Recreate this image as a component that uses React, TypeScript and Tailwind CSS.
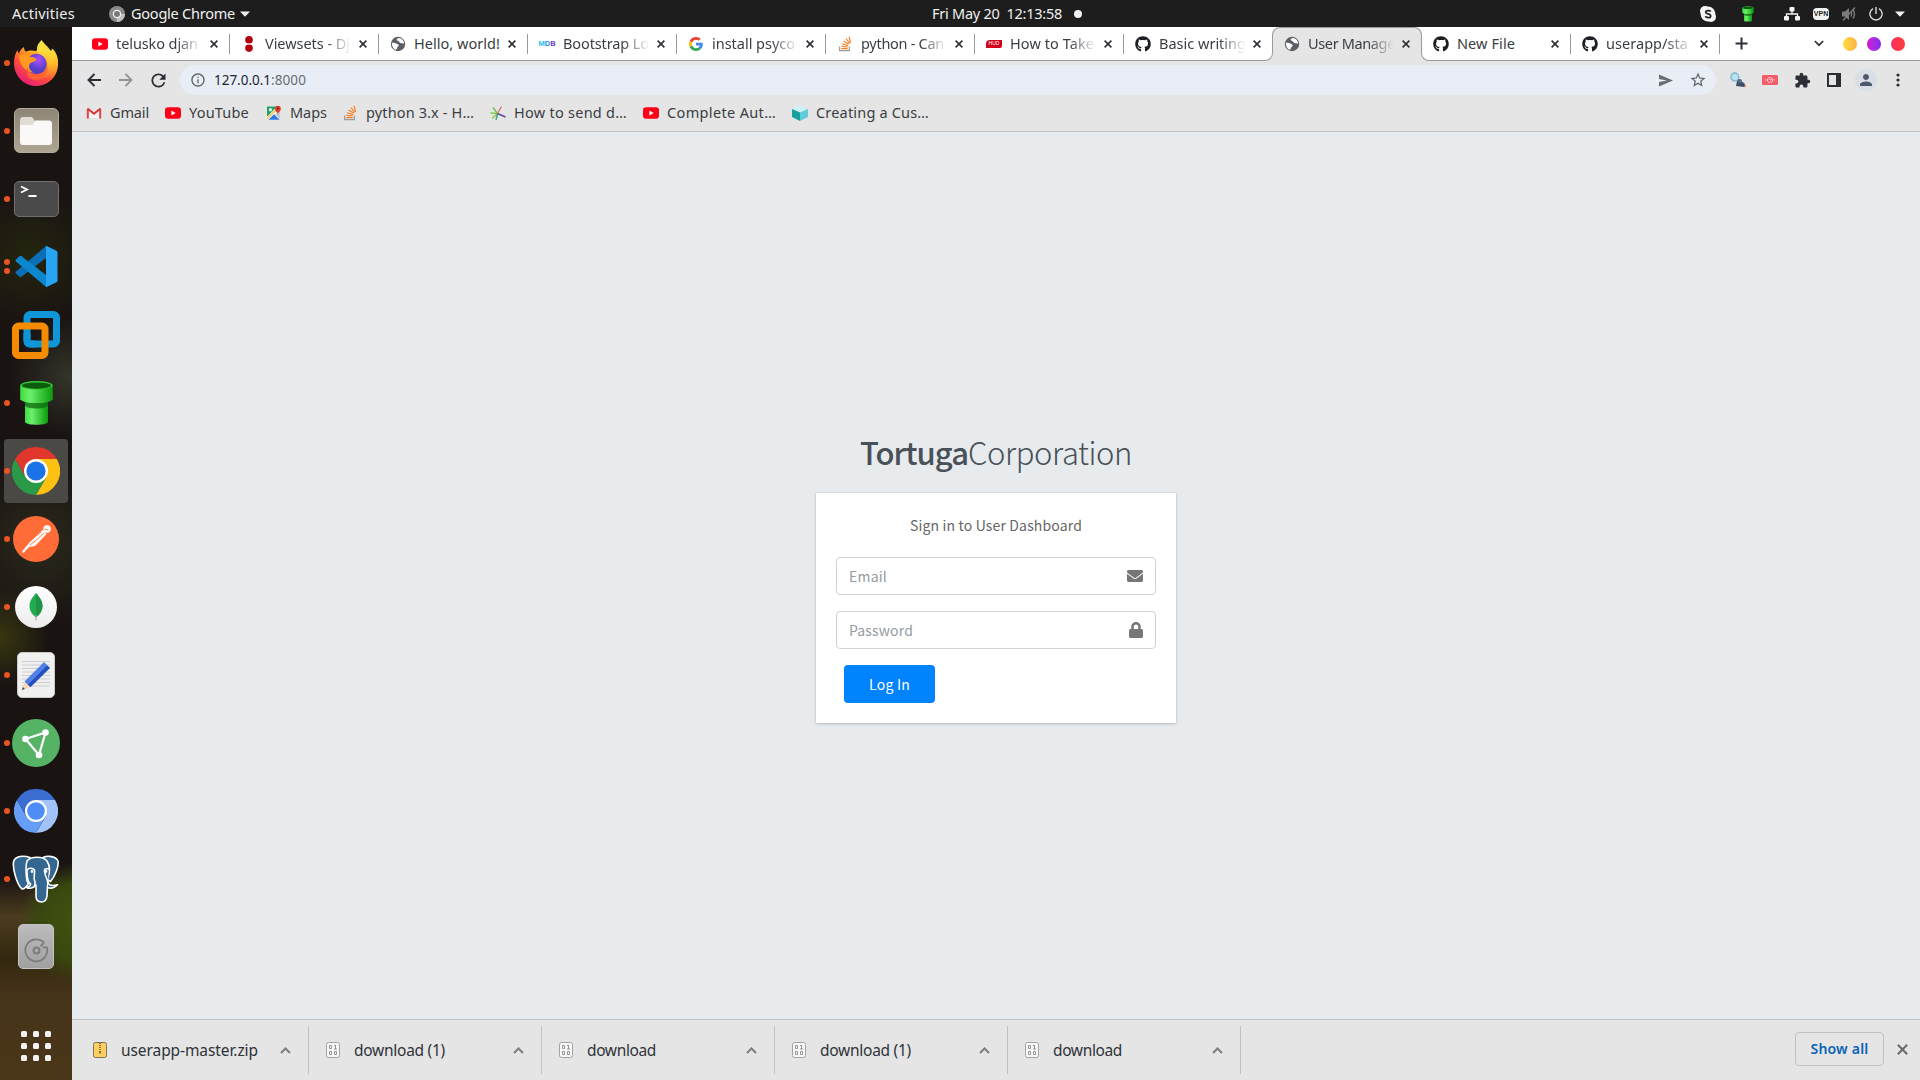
import React, { useLayoutEffect, useRef, useState } from "react";
import { FaGithub, FaEnvelope, FaLock } from "react-icons/fa";
import { MdExtension, MdPerson, MdStarBorder, MdRefresh, MdInfoOutline } from "react-icons/md";

/* Text run whose tracking is adjusted so that it fills the given width. */
function Label({ w, className = "", children }: { w?: number; className?: string; children: string }) {
  const ref = useRef<HTMLSpanElement>(null);
  const [sp, setSp] = useState(0);
  useLayoutEffect(() => {
    if (!w || !ref.current) return;
    setSp((w - ref.current.getBoundingClientRect().width) / children.length);
  }, []);
  return (
    <span ref={ref} className={`inline-block shrink-0 whitespace-pre ${className}`} style={{ letterSpacing: `${sp}px` }}>
      {children}
    </span>
  );
}

const YouTube = () => (
  <svg width="16" height="16" viewBox="0 0 16 16">
    <rect y="2.2" width="16" height="11.6" rx="3" fill="#ff0018" />
    <path d="M6.4 5.6v4.8L10.6 8z" fill="#fff" />
  </svg>
);
const GlobeIcon = () => (
  <svg width="16" height="16" viewBox="0 0 16 16">
    <circle cx="8" cy="8" r="7.2" fill="#5b6066" />
    <path d="M1.900 6.800c1.800 0 3.400-.2 4.300.8.900 1 2.600.3 2.500 1.800-.1 1-1.300 1-1.500 2.200-.2 1-.6 2-1.700 2.200C3.200 12.700 1.600 10 1.900 6.800zM9 1.900c-1.300.5-2.700.8-2.300 2 .4 1.100 1.900.6 2.400 1.700.5 1.200 1.500 1.800 2.800 1.600 1-.2 1.500.5 2.200.3C14 4.700 11.800 2.200 9 1.900z" fill="#fff" />
  </svg>
);
const GitHub = () => <FaGithub className="size-4 text-[#1b1f23]" />;
const StackOverflow = () => (
  <svg width="16" height="16" viewBox="0 0 16 16" fill="none">
    <path d="M2.600 10.500v4.200h9.800v-4.200" stroke="#9c9ea1" strokeWidth="1.300" />
    <path d="M4.300 12.600h6.400M4.400 10.300l6.300.7M5 7.700l6 1.900M6.600 4.900l5.200 3.400M9.100 2.500l3.600 5M12.200.8l1.300 6" stroke="#f47f24" strokeWidth="1.200" />
  </svg>
);
const DjangoRest = () => (
  <svg width="16" height="16" viewBox="0 0 16 16">
    <circle cx="8" cy="3.900" r="3.800" fill="#b3000f" />
    <circle cx="8" cy="12.100" r="3.800" fill="#b3000f" />
    <path d="M4 8h8" stroke="#fff" strokeWidth="1" />
  </svg>
);
const Mdb = () => (
  <span className="flex w-4 justify-center font-['Liberation_Sans'] text-[7.500px] font-bold leading-none">
    <span className="text-[#21bfe6]">M</span><span className="text-[#2b8fe0]">D</span><span className="text-[#6a3fc0]">B</span>
  </span>
);
const GoogleG = () => (
  <svg width="14" height="14" viewBox="0 0 48 48">
    <path fill="#EA4335" d="M24 9.500c3.500 0 6.700 1.200 9.200 3.600l6.900-6.900C35.900 2.400 30.500 0 24 0 14.600 0 6.500 5.400 2.600 13.200l8 6.200C12.400 13.700 17.700 9.500 24 9.500z" />
    <path fill="#4285F4" d="M47 24.600c0-1.600-.2-3.100-.4-4.600H24v9h12.900c-.6 3-2.200 5.500-4.700 7.200l7.700 6C44.400 38 47 31.900 47 24.600z" />
    <path fill="#FBBC05" d="M10.500 28.600c-.5-1.500-.8-3-.8-4.600s.3-3.100.8-4.600l-8-6.200C1 16.500 0 20.100 0 24s.9 7.500 2.600 10.800z" />
    <path fill="#34A853" d="M24 48c6.500 0 11.900-2.100 15.900-5.800l-7.700-6c-2.200 1.500-4.900 2.300-8.200 2.300-6.300 0-11.600-4.200-13.500-9.900l-8 6.200C6.500 42.600 14.600 48 24 48z" />
  </svg>
);
const Huo = () => (
  <span className="flex h-2 w-4 items-center justify-center rounded-tl-[4px] rounded-br-[2px] bg-[#d3001b] font-['Liberation_Sans'] text-[5px] leading-none text-white">HUD</span>
);

const tabs = [
  { icon: <YouTube />, title: "telusko djan", w: 82 },
  { icon: <DjangoRest />, title: "Viewsets - Dj", w: 85 },
  { icon: <GlobeIcon />, title: "Hello, world!", w: 86 },
  { icon: <Mdb />, title: "Bootstrap Lo", w: 86 },
  { icon: <GoogleG />, title: "install psyco", w: 83 },
  { icon: <StackOverflow />, title: "python - Can", w: 83 },
  { icon: <Huo />, title: "How to Take", w: 84 },
  { icon: <GitHub />, title: "Basic writing", w: 87 },
  { icon: <GlobeIcon />, title: "User Manage", w: 87, active: true },
  { icon: <GitHub />, title: "New File", w: 58 },
  { icon: <GitHub />, title: "userapp/sta", w: 82 },
];

const Cross = ({ s = 8, c = "#2d3136", sw = 1.6 }: { s?: number; c?: string; sw?: number }) => (
  <svg width={s} height={s} viewBox="0 0 8 8"><path d="M.6.6l6.800 6.800M7.400.6L.6 7.400" stroke={c} strokeWidth={sw} /></svg>
);

function Tab({ icon, title, w, active }: { icon: React.ReactNode; title: string; w: number; active?: boolean }) {
  const fits = title === "Hello, world!" || title === "New File";
  return (
    <div
      className={
        active
          ? "relative z-10 -ml-px flex h-[34px] w-[150px] shrink-0 items-center rounded-t-lg border border-b-0 border-[#9b9b9b] bg-[#e5e5e5] pb-px pl-[11px]"
          : "relative flex h-[34px] w-[149px] shrink-0 items-center border-b border-[#9b9b9b] pl-[11px]"
      }
    >
      {active && (
        <>
          <div className="absolute -left-2 bottom-0 size-2 bg-[#e5e5e5]"><div className="size-2 rounded-br-lg border-b border-r border-[#9b9b9b] bg-white" /></div>
          <div className="absolute -right-2 bottom-0 size-2 bg-[#e5e5e5]"><div className="size-2 rounded-bl-lg border-b border-l border-[#9b9b9b] bg-white" /></div>
        </>
      )}
      <span className="flex w-4 shrink-0 justify-center">{icon}</span>
      <span className={`mb-[2px] ml-2 w-[88px] shrink-0 text-[14.500px] leading-5 text-[#3a3e43] ${fits ? "" : "[mask-image:linear-gradient(to_right,#000_68%,transparent_98%)]"}`}>
        <Label w={w}>{title}</Label>
      </span>
      <span className="ml-[6px]"><Cross /></span>
      {!active && title !== "Basic writing" && <span className="absolute right-0 top-[7px] h-5 w-px bg-[#999]" />}
    </div>
  );
}

const Gmail = () => (
  <svg width="16" height="16" viewBox="0 0 16 16" fill="none">
    <path d="M3 5.500V13h10V5.500L8 9.500z" fill="#f4f4f4" />
    <path d="M1.800 13.500V4M14.200 13.500V4" stroke="#e04545" strokeWidth="2" />
    <path d="M1.400 3.400L8 8.800l6.600-5.400" stroke="#d93535" strokeWidth="2" />
  </svg>
);
const Maps = () => (
  <svg width="16" height="16" viewBox="0 0 16 16">
    <rect x="1" y="1.500" width="13" height="13" rx="1" fill="#fff" />
    <path d="M1 1.500h10L2 11H1z" fill="#1fa463" />
    <path d="M1 12l11-10.500 1.500 1.500L2 14.500H1z" fill="#f2d37a" />
    <path d="M2.500 14.800L8 9.200l5.700 5.600z" fill="#2a79e8" />
    <path d="M14 6v8L9 9.500z" fill="#c5c9cc" />
    <circle cx="4.500" cy="4.800" r="1.700" fill="#d8f1e4" />
    <path d="M11.800 9.500C11.600 7 9 6.500 9 3.700a2.900 2.900 0 015.800 0c0 2.800-2.800 3.300-3 5.800z" fill="#e33b2f" />
    <circle cx="11.900" cy="3.600" r="1" fill="#7d120b" />
  </svg>
);
const Star6 = () => (
  <svg width="16" height="16" viewBox="0 0 16 16" fill="none" strokeWidth="1.400">
    <path d="M7.500 8.500L3 2.500" stroke="#6ebf4a" /><path d="M7.500 8.500L.5 8" stroke="#7ad04a" /><path d="M7.500 8.500l-5.500 5" stroke="#8cc63f" />
    <path d="M7.500 8.500L6 15" stroke="#3aa08a" /><path d="M7.500 8.500L15.500 12" stroke="#5d4a9c" /><path d="M7.500 8.500l4-7" stroke="#e2766b" />
  </svg>
);
const Cube = () => (
  <svg width="16" height="16" viewBox="0 0 16 16">
    <path d="M8 .6L16 4 8 7.600 0 4z" fill="#cdf2f6" /><path d="M0 4l8 3.600V16l-8-4z" fill="#18a0a0" /><path d="M16 4L8 7.600V16l8-4z" fill="#5fccda" />
  </svg>
);

const bookmarks = [
  { icon: <Gmail />, t: "Gmail", w: 39, cell: "w-[79px]" },
  { icon: <YouTube />, t: "YouTube", w: 60, cell: "w-[101px]" },
  { icon: <Maps />, t: "Maps", w: 37, cell: "w-[76px]" },
  { icon: <StackOverflow />, t: "python 3.x - H…", w: 108, cell: "w-[148px]" },
  { icon: <Star6 />, t: "How to send d…", w: 113, cell: "w-[153px]" },
  { icon: <YouTube />, t: "Complete Aut…", w: 109, cell: "w-[149px]" },
  { icon: <Cube />, t: "Creating a Cus…", w: 113, cell: "w-[150px]" },
];

const Pipe = ({ className }: { className: string }) => (
  <svg className={className} viewBox="0 0 36 48">
    <defs>
      <linearGradient id="pg" x1="0" x2="1"><stop offset="0" stopColor="#3fdc3f" /><stop offset=".3" stopColor="#6cf06c" /><stop offset="1" stopColor="#0a9a0a" /></linearGradient>
    </defs>
    <path d="M6 20v24c2 3.500 22 3.500 24 0V20z" fill="url(#pg)" />
    <path d="M6 22v5c4 3.500 20 3.500 24 0v-5z" fill="#0c6a10" opacity=".75" />
    <path d="M1 6v14c4 5.500 30 5.500 34 0V6z" fill="url(#pg)" />
    <ellipse cx="18" cy="5.500" rx="17" ry="4.500" fill="#35c935" />
    <ellipse cx="18" cy="5.800" rx="15" ry="3.300" fill="#0b5c0d" />
  </svg>
);

const Firefox = () => (
  <svg width="44" height="46" viewBox="0 0 44 46">
    <defs>
      <linearGradient id="ff1" x1=".85" y1=".05" x2=".2" y2="1"><stop offset="0" stopColor="#fff44f" /><stop offset=".3" stopColor="#ffa51f" /><stop offset=".6" stopColor="#ff4f3a" /><stop offset="1" stopColor="#e01483" /></linearGradient>
      <linearGradient id="ff2" x1=".5" y1="0" x2=".5" y2="1"><stop offset="0" stopColor="#fff44f" /><stop offset=".6" stopColor="#ffc02a" /><stop offset="1" stopColor="#ff6a2e" /></linearGradient>
      <radialGradient id="ff3" cx=".6" cy=".3"><stop offset="0" stopColor="#b04dfa" /><stop offset="1" stopColor="#5340c8" /></radialGradient>
    </defs>
    <path d="M0 23c0-5 1-9 3.500-13 .3 1.600.8 2.500 1.500 3.200C6 10.800 7.500 8.600 10 7c0 2 .6 3.400 1.600 4.600 3-1.200 7-1.600 10.400-.6L27 6l10 5c1-.4.8-1.500.6-2.500C41 12 44 17 44 24c0 12.500-10 22-22 22S0 36 0 23z" fill="url(#ff1)" />
    <path d="M27.500 0c-4 4-6 8.500-3.500 13 3 3 9 5 10 12 .6 6-3 12-9 13 9 0 18-6 19-15 .3-6-2-11-5.500-14.500-.2 1.400-.6 2.500-1.300 3.300C35 7 31 5 27.500 0z" fill="url(#ff2)" opacity=".95" />
    <circle cx="22.500" cy="24" r="10.200" fill="url(#ff3)" />
    <path d="M5 16c5-3.500 9-1 11 .8 3 .2 5.500 1 6.500 2.800-1.500 3-5 2-6.500 4-2 3-1 7 4 9-8-.5-14-6-15-16.600z" fill="#ff9a1f" />
    <path d="M13 27c1 5 5 7.500 9.500 7.500 5 0 9-3 10.200-8 .8 7-3 13.500-10.700 13.500S12 34 13 27z" fill="#ff6235" />
  </svg>
);
const Files = () => (
  <div className="flex size-[45px] items-center justify-center rounded-md border border-[#b5ad9c] bg-gradient-to-b from-[#8d8675] to-[#aea592]">
    <svg width="34" height="30" viewBox="0 0 34 30"><path d="M1 4q0-3 3-3h9l3 4h14v8H1z" fill="#e0dcd4" /><path d="M1 9h12.500l3-4.500H30q3 0 3 3V26q0 3-3 3H4q-3 0-3-3z" fill="#faf9f7" /></svg>
  </div>
);
const Terminal = () => (
  <div className="h-9 w-[45px] rounded-[5px] border border-[#707070] bg-[#4a4a4a]">
    <svg width="43" height="34" viewBox="0 0 43 34" fill="none" stroke="#fff" strokeWidth="1.900"><path d="M6 4.500l6 3-6 3M13.500 14h8" /></svg>
  </div>
);
const VsCode = () => (
  <svg width="43" height="43" viewBox="0 0 43 43">
    <path d="M31 1v12L6.500 31.800q-1 .7-2 0L1 28.600q-1-1 0-2z" fill="#0a6fb4" />
    <path d="M31 42V30L6.500 11.200q-1-.7-2 0L1 14.400q-1 1 0 2z" fill="#0b86cf" />
    <path d="M31 .8l10.500 5q1 .5 1 1.700v28q0 1.200-1 1.700L31 42.200z" fill="#27a4f2" />
  </svg>
);
const VmWare = () => (
  <svg width="48" height="48" viewBox="0 0 48 48" fill="none" strokeWidth="7">
    <rect x="15" y="3.500" width="29.500" height="29.500" rx="3" stroke="#0e96d8" />
    <rect x="3.500" y="15" width="29.500" height="29.500" rx="3" stroke="#f48b00" />
    <path d="M15 22v7.500q0 3.500 3.500 3.500H23" stroke="#0e96d8" />
  </svg>
);
const Wheel = ({ r, y, g, b, s }: { r: string; y: string; g: string; b: string; s: number }) => (
  <svg width={s} height={s} viewBox="0 0 48 48">
    <path d="M24 24L3.200 12A24 24 0 0144.800 12z" fill={r} />
    <path d="M24 12h20.800A24 24 0 0124 48l10.400-18z" fill={y} />
    <path d="M3.200 12A24 24 0 0024 48l10.400-18L24 24 13.600 30z" fill={g} />
    <path d="M3.200 12H24v12l-10.400 6z" fill={r} />
    <circle cx="24" cy="24" r="12" fill="#fff" />
    <circle cx="24" cy="24" r="9.600" fill={b} />
  </svg>
);
const Postman = () => (
  <svg width="46" height="46" viewBox="0 0 46 46">
    <circle cx="23" cy="23" r="23" fill="#ff6c37" />
    <circle cx="34" cy="13" r="3.800" fill="#fff" />
    <path d="M17 26L29.500 14l4 4L22 30l-6 1-5 5.500-2 .3.5-2z" fill="#fff" />
    <path d="M18 24l10-8M20 27l11-10M17 29l5-4M31.500 13l4 1" stroke="#ff6c37" strokeWidth=".9" fill="none" />
  </svg>
);
const Mongo = () => (
  <div className="flex size-[42px] items-center justify-center rounded-full bg-gradient-to-b from-white to-[#ececec]">
    <svg width="14" height="28" viewBox="0 0 14 28"><path d="M7 0C3 5 .5 8 .5 13c0 5 3 8.500 6 11h1c3-2.500 6-6 6-11C13.500 8 11 5 7 0z" fill="#22ac52" /><path d="M7 0c4 5 6.500 8 6.500 13 0 5-3 8.500-6 11H7z" fill="#1e9447" /><path d="M7 22v5.500" stroke="#aaa" strokeWidth="1.200" /></svg>
  </div>
);
const Editor = () => (
  <svg width="38" height="46" viewBox="0 0 38 46">
    <rect x=".5" y=".5" width="37" height="45" rx="4.500" fill="#f0f0f0" stroke="#c9c9c9" />
    <path d="M5 9.500h28M5 13h28M5 16.500h28M5 20h28M5 23.500h28M5 27h28M5 30.500h28M5 34h28" stroke="#cfcfcf" strokeWidth="1" />
    <path d="M5 38l2.500-8.500 6 5.800z" fill="#fbd9b8" /><path d="M5 38l.9-3 2 2z" fill="#444" />
    <path d="M7.500 29.500L27 10l3 3-19.500 19.500z" fill="#4f80ea" /><path d="M10.500 32.500L30 13l3 3-19.500 19.300z" fill="#2450c0" />
  </svg>
);
const Proton = () => (
  <svg width="48" height="48" viewBox="0 0 48 48">
    <circle cx="24" cy="24" r="24" fill="#56b366" />
    <path d="M13.500 20L33.500 13.500 27 36z" stroke="#fff" strokeWidth="2.200" fill="none" />
    <circle cx="13.500" cy="20" r="3.300" fill="#fff" /><circle cx="33.500" cy="13.500" r="3.300" fill="#fff" /><circle cx="27" cy="36" r="3.300" fill="#fff" />
  </svg>
);
const Postgres = () => (
  <svg width="48" height="48" viewBox="0 0 48 48" strokeWidth="1.600" stroke="#fff" strokeLinejoin="round" strokeLinecap="round" fill="#336791">
    <path d="M31 2.500c5-2.500 13-1 15 3.500 1 5-3 15.500-7.500 20.500-4-2-6-6-6-10z" />
    <path d="M18 2.500C12 .5 3 .5 1.500 7 .5 14 5 29 9.500 33.500c2 1.300 4-.5 6.500-4z" />
    <path d="M15 6c4-5 16-5 20 0 3 4.500 3 12 .5 19 .5 2 .3 4 0 6L35 41c-.5 4-2 6-5.500 6S24 45 24 41V30c-3 0-7-1-9-4-1-7-2-14 0-20z" />
    <path d="M15 15c2-2.500 6-2 7.500 0 .5 4-1.500 7 .5 12 .5 2.500-.5 4-1 5-3 1.500-6 1.500-7.500.3 3-.5 4-1.300 4-3.300-3-2-3.500-9-3.500-14z" />
    <path d="M36.500 14c-3-.8-4.500 0-4 2.500.5 4.500 3.500 9 4.500 13 2 1 5 1.300 8.500.3-3 3.200-7 3.700-9.500 3" />
    <circle cx="20" cy="16.500" r=".6" /><circle cx="34" cy="16.500" r=".6" />
  </svg>
);
const Disk = () => (
  <div className="flex h-[45px] w-9 items-center justify-center rounded-[5px] border border-[#c4c4c4] bg-gradient-to-b from-[#bcbcbc] to-[#a0a0a0]">
    <svg className="mt-2 size-[27px]" viewBox="0 0 30 30" fill="none" stroke="#7d7d7d" strokeWidth="2"><path d="M23.500 6.300A12.200 12.200 0 1026.500 11.500L22 11.500M19.500 10.500L23.500 6.300" /><circle cx="15" cy="15" r="3.300" strokeWidth="2.300" /></svg>
  </div>
);

const dock: { el: React.ReactNode; dots: number; sel?: boolean }[] = [
  { el: <Firefox />, dots: 1 },
  { el: <Files />, dots: 1 },
  { el: <Terminal />, dots: 1 },
  { el: <VsCode />, dots: 2 },
  { el: <VmWare />, dots: 0 },
  { el: <Pipe className="h-[46px] w-[35px]" />, dots: 1 },
  { el: <Wheel s={48} r="#e0362c" y="#fcc111" g="#2b9a48" b="#1b73e8" />, dots: 1, sel: true },
  { el: <Postman />, dots: 1 },
  { el: <Mongo />, dots: 1 },
  { el: <Editor />, dots: 1 },
  { el: <Proton />, dots: 1 },
  { el: <Wheel s={44} r="#3c6dd0" y="#a1c2fa" g="#669df6" b="#4c8df6" />, dots: 1 },
  { el: <Postgres />, dots: 1 },
  { el: <Disk />, dots: 0 },
];

const Binary = () => (
  <svg width="14" height="16" viewBox="0 0 14 16" fill="none" stroke="#8b8b8b">
    <rect x=".5" y=".5" width="13" height="15" rx="2" fill="#f7f7f7" stroke="#a3a3a3" />
    <path d="M3.500 3.500h2v3h-2zM9.500 3v4M8 3.500h1.500M8 7h3M3.500 9.500h2v3h-2zM8.500 9.500h2v3h-2z" strokeWidth=".9" />
  </svg>
);
const Zip = () => (
  <svg width="14" height="16" viewBox="0 0 14 16">
    <rect x=".5" y=".5" width="13" height="15" rx="2" fill="#fdd062" stroke="#7d7355" />
    <path d="M7 1v8" stroke="#6b5a2a" strokeWidth="1.600" strokeDasharray="1 1" /><path d="M7 9v2.500" stroke="#8a7335" strokeWidth="2" />
  </svg>
);

const downloads = [
  { icon: <Zip />, t: "userapp-master.zip", w: 137, first: true },
  { icon: <Binary />, t: "download (1)", w: 91 },
  { icon: <Binary />, t: "download", w: 69 },
  { icon: <Binary />, t: "download (1)", w: 91 },
  { icon: <Binary />, t: "download", w: 69 },
];

export default function App() {
  return (
    <div className="flex h-[1080px] w-[1920px] flex-col overflow-hidden bg-[#1d1d1d] font-['Noto_Sans',sans-serif]">
      <header className="flex h-[27px] shrink-0 items-center bg-[#1d1d1d] text-[14.500px] leading-5 text-[#f0f0f0]">
        <div className="flex w-[932px] items-center pl-3">
          <Label w={63} className="mb-[2px]">Activities</Label>
          <svg className="ml-[34px] mr-[6px]" width="16" height="16" viewBox="0 0 16 16"><circle cx="8" cy="8" r="8" fill="#8a8a8a" /><path d="M8 8h8a8 8 0 01-8 8z" fill="#c0c0c0" /><circle cx="8" cy="8" r="3.600" fill="#777" stroke="#f2f2f2" strokeWidth="1.300" /></svg>
          <Label w={104} className="mb-[2px]">Google Chrome</Label>
          <svg className="ml-[5px]" width="10" height="6"><path d="M0 .5h10L5 5.800z" fill="#f2f2f2" /></svg>
        </div>
        <Label w={130} className="mb-[2px]">Fri May 20  12:13:58</Label>
        <span className="ml-3 size-2 rounded-full bg-[#f2f2f2]" />
        <div className="ml-auto flex items-center">
          <svg className="mr-[26px]" width="16" height="16" viewBox="0 0 16 16"><circle cx="5" cy="5" r="5" fill="#f4f4f4" /><circle cx="11" cy="11" r="5" fill="#f4f4f4" /><circle cx="8" cy="8" r="7.400" fill="#f4f4f4" /><path d="M10.700 5.500C10 4.200 5.700 4 5.700 6.200c0 2.200 5 1.200 5 3.700 0 2.300-4.400 2.200-5.300.3" stroke="#222" strokeWidth="1.700" fill="none" /></svg>
          <Pipe className="mr-[30px] h-4 w-3" />
          <svg className="mr-[13px]" width="16" height="14" viewBox="0 0 16 14" fill="#f2f2f2"><rect x="5.500" width="5" height="4.500" rx="1" /><rect y="9" width="5" height="4.500" rx="1" /><rect x="11" y="9" width="5" height="4.500" rx="1" /><path d="M8 4v3M2.500 9.500V7h11v2.500" stroke="#f2f2f2" strokeWidth="1.300" fill="none" /></svg>
          <span className="mr-[13px] flex h-3 w-4 items-center justify-center rounded-sm bg-[#f2f2f2] font-['Liberation_Sans'] text-[7px] font-bold leading-none text-[#1d1d1d]">VPN</span>
          <svg className="mr-3" width="15" height="14" viewBox="0 0 15 14" fill="none" stroke="#7b7b7b" strokeWidth="1.400"><path d="M0 4.500h3L7 1v12L3 9.500H0z" fill="#7b7b7b" stroke="none" /><path d="M9 4.500q1.500 2.500 0 5M11 2.500q3 4.500 0 9M1 13.500L13 .5" /></svg>
          <svg className="mr-3" width="14" height="14" viewBox="0 0 14 14" fill="none" stroke="#d8d8d8" strokeWidth="1.400"><path d="M4 1.600a6.100 6.100 0 106 0M7 0v7" /></svg>
          <svg className="mr-[15px]" width="10" height="6"><path d="M0 .5h10L5 5.800z" fill="#f2f2f2" /></svg>
        </div>
      </header>

      <div className="flex min-h-0 flex-1">
        <aside className="flex w-[72px] shrink-0 flex-col bg-[#191312] bg-[radial-gradient(circle_at_78px_895px,#42520f_0,#39480f_38px,transparent_60px),radial-gradient(circle_at_0px_610px,#383710_0,transparent_50px),radial-gradient(circle_at_70px_350px,#33352a_0,transparent_60px),radial-gradient(circle_at_30px_230px,#25250f_0,transparent_70px),radial-gradient(circle_at_40px_515px,#2b2a1c_0,transparent_85px),linear-gradient(to_bottom,transparent_0,transparent_850px,#4c3c1f_890px,#33280f_930px,#46341a_970px,#4a3618_100%)] pt-px">
          {dock.map((d, i) => (
            <div key={i} className="flex h-[68px] shrink-0 items-center pl-1 pt-px">
              <div className={`relative flex size-16 items-center justify-center rounded-[4px] ${d.sel ? "bg-[#4b4946]" : ""}`}>
                {d.el}
                <span className="absolute left-0 top-0 flex h-16 flex-col items-start justify-center gap-[3px]">
                  {Array.from({ length: d.dots }, (_, k) => <i key={k} className="size-[6px] rounded-full bg-[#e95420]" />)}
                </span>
              </div>
            </div>
          ))}
          <div className="ml-[21px] mt-[51px] grid w-[30px] grid-cols-3 gap-[6px]">
            {Array.from({ length: 9 }, (_, k) => <i key={k} className="size-[6px] rounded-[1.500px] bg-[#f2f2f2]" />)}
          </div>
        </aside>

        <main className="flex min-w-0 flex-1 flex-col bg-[#e5e5e5]">
          <div className="flex h-[34px] shrink-0 bg-white">
            <div className="w-[9px] border-b border-[#9b9b9b]" />
            {tabs.map((t, i) => <Tab key={i} {...t} />)}
            <div className="flex flex-1 items-center border-b border-[#9b9b9b]">
              <svg className="ml-[15px]" width="13" height="13"><path d="M6.500 .5v12M.5 6.500h12" stroke="#2d3136" strokeWidth="2" /></svg>
              <svg className="ml-auto mr-[19px]" width="10" height="7" viewBox="0 0 10 7"><path d="M.8 1L5 5.200 9.200 1" stroke="#333" strokeWidth="1.700" fill="none" /></svg>
              <div className="mr-[15px] flex gap-[10px]">
                <i className="size-[14px] rounded-full bg-gradient-to-r from-[#fae03c] to-[#ffae45]" />
                <i className="size-[14px] rounded-full bg-gradient-to-r from-[#d60bcb] to-[#7d2af5]" />
                <i className="size-[14px] rounded-full bg-gradient-to-r from-[#ff2d62] to-[#ff3d36]" />
              </div>
            </div>
          </div>

          <div className="flex h-[38px] shrink-0 items-center pl-[6px] pr-[6px] text-[#2b2f35]">
            <span className="flex w-8 justify-center"><svg width="14" height="14" viewBox="0 0 14 14" fill="none" stroke="#2b2f35" strokeWidth="1.900"><path d="M14 7H1.500M7.500 1l-6 6 6 6" /></svg></span>
            <span className="flex w-8 justify-center"><svg width="14" height="14" viewBox="0 0 14 14" fill="none" stroke="#919395" strokeWidth="1.800"><path d="M0 7h12.500M6.500 1l6 6-6 6" /></svg></span>
            <span className="flex w-8 justify-center"><MdRefresh className="size-[21px]" /></span>
            <div className="ml-[6px] flex h-[30px] w-[1536px] items-center rounded-full bg-[#e9edf6] pl-[10px] text-[13.500px] leading-5">
              <MdInfoOutline className="mr-2 size-4 text-[#5f6368]" />
              <Label w={57} className="text-[#202630]">127.0.0.1</Label>
              <Label w={35} className="text-[#6a6d72]">:8000</Label>
              <svg className="ml-auto mr-4" width="14" height="13" viewBox="0 0 14 13"><path d="M0 .5L14 6.500 0 12.500V8l8-1.500L0 5z" fill="#6b6d70" /></svg>
              <MdStarBorder className="mr-[9px] size-[18px] text-[#606367]" />
            </div>
            <div className="ml-[6px] flex">
              <span className="flex w-8 items-center justify-center"><svg width="16" height="16" viewBox="0 0 16 16"><circle cx="4.800" cy="5" r="4" fill="#b7e2f2" stroke="#7fb6cc" strokeWidth="1.300" /><path d="M7 9l2-2 6 5-1 3-8-1z" fill="#3d4f68" /><circle cx="10" cy="9" r="2" fill="#5b6f8a" /><path d="M14 12l2 2-1.500 1.500z" fill="#b5532c" /></svg></span>
              <span className="flex w-8 items-center justify-center"><svg width="16" height="10" viewBox="0 0 16 10"><rect width="16" height="10" rx="1.300" fill="#f55d68" /><circle cx="8" cy="5" r="2.600" fill="none" stroke="#fbc6c9" /><path d="M3 5h1.500M11.500 5H13M7 4l1 1 1.500-.5" stroke="#fbc6c9" fill="none" /></svg></span>
              <span className="flex w-8 items-center justify-center"><MdExtension className="size-[17px]" /></span>
              <span className="flex w-8 items-center justify-center"><svg width="14" height="14"><path fillRule="evenodd" d="M0 0h14v14H0zM2 2v10h7V2z" fill="#2b2f35" /></svg></span>
              <span className="flex w-8 items-center justify-center"><span className="flex size-[22px] items-center justify-center rounded-full bg-[#d9dee6]"><MdPerson className="size-[18px] text-[#4d5a6c]" /></span></span>
              <span className="flex w-8 items-center justify-center"><svg width="4" height="14" fill="#2b2f35"><circle cx="2" cy="2" r="1.600" /><circle cx="2" cy="7" r="1.600" /><circle cx="2" cy="12" r="1.600" /></svg></span>
            </div>
          </div>

          <div className="flex h-[33px] shrink-0 items-center border-b border-[#c2c2c2] pb-[5px] pl-[14px] text-[14.500px] leading-5 text-[#3a3e43]">
            {bookmarks.map((b) => (
              <div key={b.t} className={`flex shrink-0 items-center gap-2 ${b.cell}`}>
                <span className="w-4 shrink-0">{b.icon}</span>
                <Label w={b.w} className="mb-[2px]">{b.t}</Label>
              </div>
            ))}
          </div>

          <section className="flex min-h-0 flex-1 flex-col items-center justify-center bg-[#e7ebee] font-['Noto_Sans_CJK_JP','Noto_Sans',sans-serif]">
            <h1 className="mb-4 flex h-[49px] items-center pb-[2px] text-[31px] leading-[49px] text-[#495057]">
              <Label w={108} className="font-medium">Tortuga</Label>
              <Label w={164} className="font-light">Corporation</Label>
            </h1>
            <div className="h-[230px] w-[360px] bg-white p-5 text-[14px] leading-6 shadow-[0_0_1px_rgba(0,0,0,.125),0_1px_3px_rgba(0,0,0,.2)]">
              <p className="mb-5 text-center text-[#666]"><Label w={172}>Sign in to User Dashboard</Label></p>
              <div className="mb-4 flex h-[38px] items-center justify-between rounded border border-[#ced4da] px-3 text-[#939ba2]">
                <Label w={38}>Email</Label><FaEnvelope className="size-4 text-[#777]" />
              </div>
              <div className="mb-4 flex h-[38px] items-center justify-between rounded border border-[#ced4da] px-3 text-[#939ba2]">
                <Label w={64}>Password</Label><FaLock className="-mr-px size-4 text-[#777]" />
              </div>
              <button className="ml-2 flex h-[38px] w-[91px] items-center justify-center rounded bg-[#0083fd] text-white"><Label w={41}>Log In</Label></button>
            </div>
          </section>

          <footer className="flex h-[61px] shrink-0 border-t border-[#c2c2c2] text-[#2e3338]">
            {downloads.map((d, i) => (
              <div key={i} className={`my-[6px] flex h-12 shrink-0 items-center border-r border-[#c2c2c2] ${d.first ? "w-[237px] pl-[21px]" : "w-[233px] pl-[17px]"}`}>
                {d.icon}
                <Label w={d.w} className="ml-[14px] text-[15.500px] leading-6">{d.t}</Label>
                <svg className="ml-auto mr-[17px]" width="11" height="7" viewBox="0 0 11 7"><path d="M1 6l4.500-4.500L10 6" stroke="#7c7e81" strokeWidth="2" fill="none" /></svg>
              </div>
            ))}
            <div className="ml-auto mt-3 flex h-[34px] items-center gap-[13px] pr-3">
              <button className="flex h-[34px] w-[89px] items-center justify-center rounded border border-[#c2c2c2] text-[14px] font-semibold leading-5 text-[#0b63b8]"><Label w={58}>Show all</Label></button>
              <Cross s={11} c="#6a6c70" sw={1.5} />
            </div>
          </footer>
        </main>
      </div>
    </div>
  );
}
